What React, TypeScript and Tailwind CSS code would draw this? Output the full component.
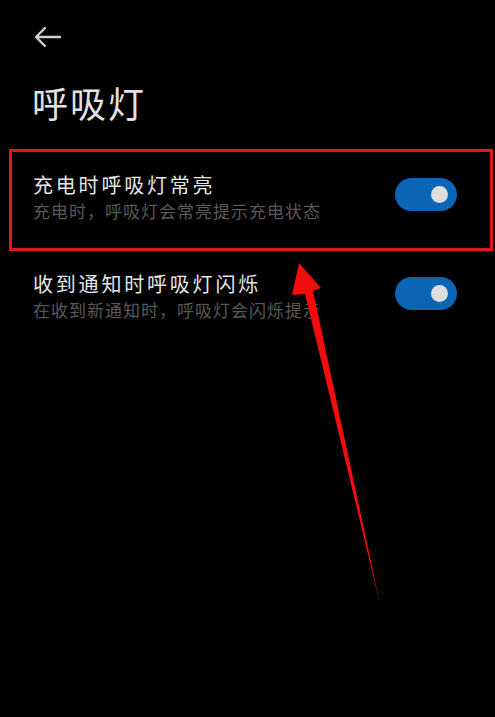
import React from "react";

type Item = { title: string; desc: string };

const items: Item[] = [
  { title: "充电时呼吸灯常亮", desc: "充电时，呼吸灯会常亮提示充电状态" },
  { title: "收到通知时呼吸灯闪烁", desc: "在收到新通知时，呼吸灯会闪烁提示" },
];

function Toggle() {
  return (
    <div className="mt-[7px] flex h-[33px] w-[62px] shrink-0 items-center justify-end rounded-full bg-[#0b64b4] pr-[9px]">
      <div className="h-[17px] w-[17px] rounded-full bg-[#dedede]" />
    </div>
  );
}

function Row({ item, boxed }: { item: Item; boxed?: boolean }) {
  return (
    <div
      className={
        boxed
          ? "ml-[9px] mr-[2px] flex h-[102px] items-start justify-between border-[3px] border-[#e01818] pl-[21px] pr-[33px] pt-[19px]"
          : "ml-[9px] mr-[2px] flex h-[98px] items-start justify-between border-[3px] border-transparent pl-[21px] pr-[33px] pt-[16px]"
      }
    >
      <div className="flex flex-col">
        <span className="text-[20px] leading-[28px] tracking-[2.8px] text-[#e6e6e6]">{item.title}</span>
        <span className="text-[17px] leading-[24px] tracking-[1px] text-[#595959]">{item.desc}</span>
      </div>
      <Toggle />
    </div>
  );
}

export default function App() {
  return (
    <div
      className="relative h-[717px] w-[495px] overflow-hidden bg-black"
      style={{ fontFamily: '"Noto Sans CJK SC", "Noto Sans", sans-serif' }}
    >
      <div className="pl-[34px] pt-[26px]">
        <svg width="28" height="22" viewBox="0 0 28 22" fill="none" stroke="#cfcfcf" strokeWidth="2.4" strokeLinecap="round" strokeLinejoin="round">
          <path d="M26 11H3M11 2L2 11l9 9" />
        </svg>
      </div>
      <h1 className="pl-[32px] pt-[30px] text-[36px] leading-[48px] tracking-[2px] text-[#e2e2e2]">呼吸灯</h1>
      <div className="mt-[23px] flex flex-col">
        {items.map((it, i) => (
          <Row key={it.title} item={it} boxed={i === 0} />
        ))}
      </div>
      <svg className="absolute left-0 top-0" width="495" height="717" viewBox="0 0 495 717">
        <polygon points="299,263 321,288 313,291 380,604 305,294 292,295" fill="#f20c0c" />
      </svg>
    </div>
  );
}
